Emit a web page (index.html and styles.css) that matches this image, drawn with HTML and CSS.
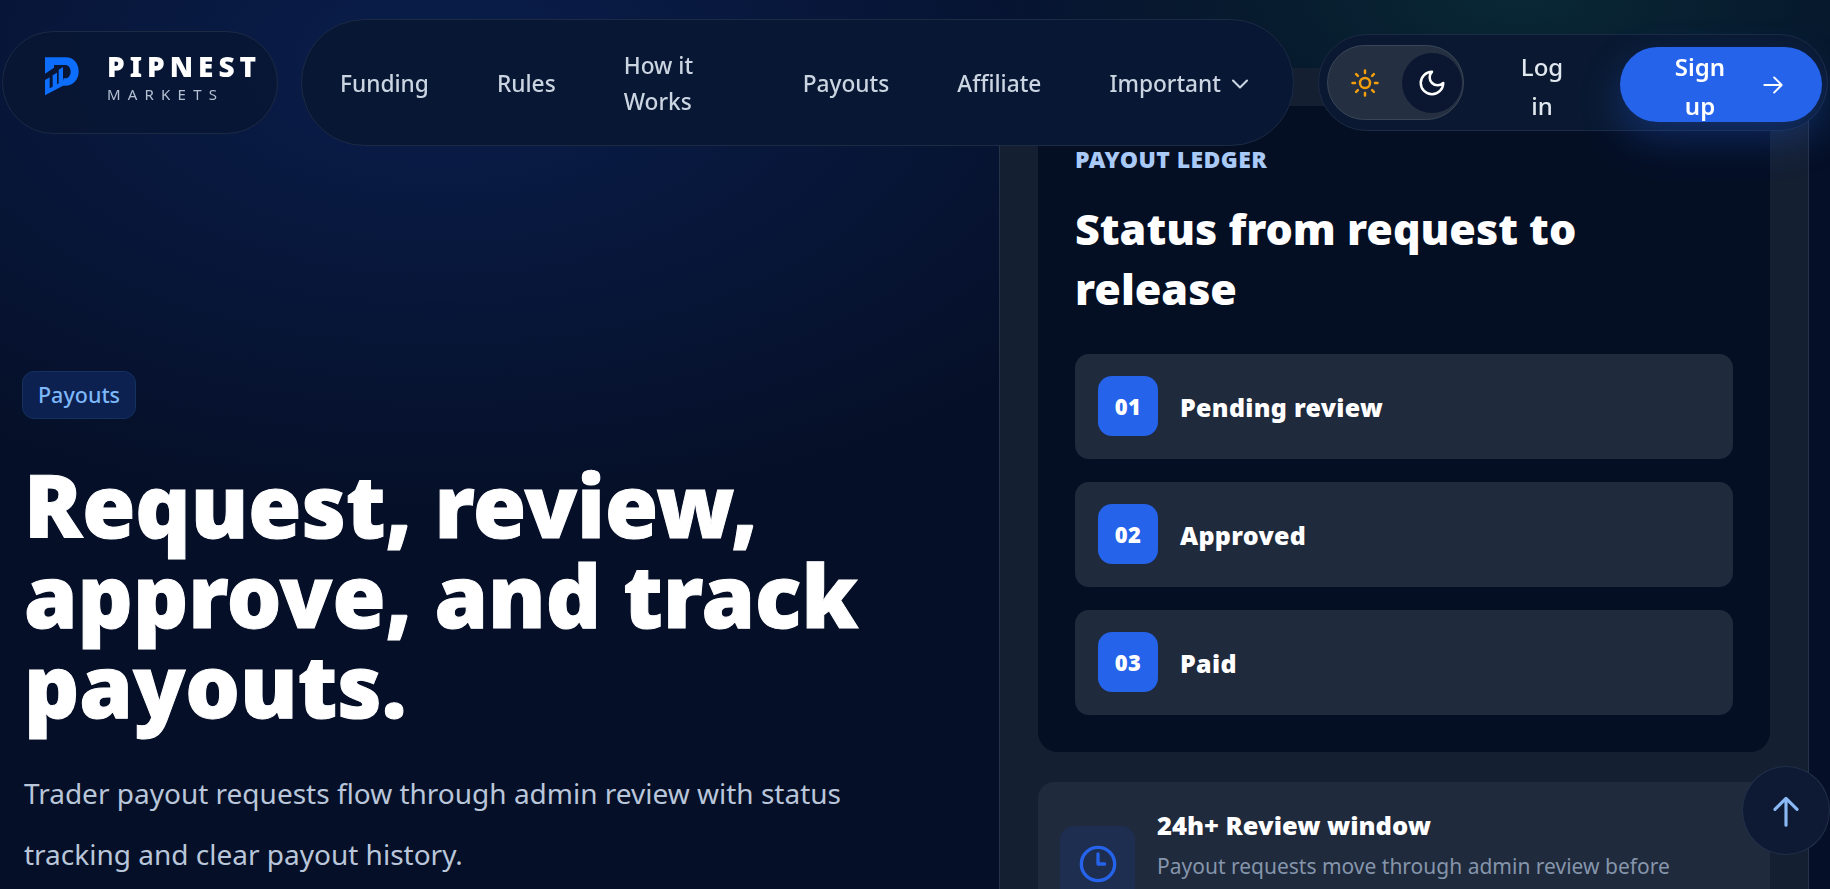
FILE: index.html
```html
<!DOCTYPE html>
<html lang="en">
<head>
  <meta charset="UTF-8" />
  <meta name="viewport" content="width=device-width, initial-scale=1" />
  <title>Payouts - PipNest Markets</title>
  <link rel="stylesheet" href="styles.css">
</head>
<body>

  <!-- Floating header -->
  <header class="site-header">
    <a class="logo-pill" href="#">
      <svg class="logo-mark" viewBox="0 0 150 162" aria-hidden="true">
        <path fill="#0d6efd" d="M15 25H78C100 25 116 42 116 68C116 92 98 110 76 110H66L71 88H76C85 88 92 79 92 68C92 56 85 48 75 48H42V56L15 74Z"/>
        <path fill="#0d6efd" d="M15 93L29 85V118L38 113V79L51 71V106L56 103V62L69 54V110L15 139Z"/>
      </svg>
      <span class="logo-text">
        <strong>PIPNEST</strong>
        <small>MARKETS</small>
      </span>
    </a>

    <nav class="main-nav">
      <a href="#">Funding</a>
      <a href="#">Rules</a>
      <a href="#" class="nav-wrap">How it Works</a>
      <a href="#">Payouts</a>
      <a href="#">Affiliate</a>
      <a href="#" class="nav-drop">Important
        <svg viewBox="0 0 24 24" width="28" height="28" fill="none" stroke="currentColor" stroke-width="1.8" stroke-linecap="round" stroke-linejoin="round"><path d="M6 9l6 6 6-6"/></svg>
      </a>
    </nav>

    <div class="auth-pill">
      <div class="theme-toggle">
        <svg class="sun" viewBox="0 0 24 24" width="30" height="30" fill="none" stroke="#f59e0b" stroke-width="2" stroke-linecap="round"><circle cx="12" cy="12" r="4"/><path d="M12 2v2M12 20v2M4.9 4.9l1.4 1.4M17.7 17.7l1.4 1.4M2 12h2M20 12h2M4.9 19.1l1.4-1.4M17.7 6.3l1.4-1.4"/></svg>
        <span class="knob">
          <svg viewBox="0 0 24 24" width="30" height="30" fill="none" stroke="#fff" stroke-width="2" stroke-linecap="round" stroke-linejoin="round"><path d="M12 3a6 6 0 0 0 9 9 9 9 0 1 1-9-9Z"/></svg>
        </span>
      </div>
      <a class="login" href="#">Log in</a>
      <a class="signup" href="#">
        <span>Sign up</span>
        <svg viewBox="0 0 24 24" width="26" height="26" fill="none" stroke="currentColor" stroke-width="1.8" stroke-linecap="round" stroke-linejoin="round"><path d="M4 12h16M13 5l7 7-7 7"/></svg>
      </a>
    </div>
  </header>

  <main class="page">
    <!-- Hero copy -->
    <section class="hero">
      <span class="tag">Payouts</span>
      <h1>Request, review, approve, and track payouts.</h1>
      <p>Trader payout requests flow through admin review with status tracking and clear payout history.</p>
    </section>

    <!-- Ledger panel -->
    <aside class="panel">
      <div class="ledger">
        <div class="eyebrow">PAYOUT LEDGER</div>
        <h2>Status from request to release</h2>
        <div class="status-row"><span class="num">01</span><span>Pending review</span></div>
        <div class="status-row"><span class="num">02</span><span>Approved</span></div>
        <div class="status-row"><span class="num">03</span><span>Paid</span></div>
      </div>

      <div class="info-card">
        <span class="info-icon">
          <svg viewBox="0 0 24 24" width="40" height="40" fill="none" stroke="#2563eb" stroke-width="2" stroke-linecap="round" stroke-linejoin="round"><circle cx="12" cy="12" r="10"/><path d="M12 6v6h4"/></svg>
        </span>
        <div>
          <h3>24h+ Review window</h3>
          <p>Payout requests move through admin review before</p>
        </div>
      </div>
    </aside>
  </main>

  <a class="to-top" href="#">
    <svg viewBox="0 0 24 24" width="38" height="38" fill="none" stroke="#8ab8f5" stroke-width="2" stroke-linecap="round" stroke-linejoin="round"><path d="M12 21V4M5 11l7-7 7 7"/></svg>
  </a>

</body>
</html>
```

FILE: styles.css
```css
/* Basic reset */
* {
  margin: 0;
  padding: 0;
  box-sizing: border-box;
}

html, body {
  height: 100%;
}

body {
  font-family: 'Noto Sans', 'Open Sans', sans-serif;
  color: #fff;
  overflow: hidden;
  background:
    radial-gradient(ellipse 520px 200px at 1520px 0, rgba(14, 70, 70, 0.45), transparent),
    radial-gradient(ellipse 820px 460px at 440px 60px, #0a1e4c, transparent),
    #050f27;
}

a {
  color: inherit;
  text-decoration: none;
}

/* Header */
.site-header {
  position: fixed;
  top: 19px;
  left: 2px;
  z-index: 5;
  display: flex;
  align-items: center;
}

.logo-pill {
  display: flex;
  align-items: center;
  gap: 17px;
  width: 276px;
  height: 103px;
  padding-left: 37px;
  border: 1px solid #1c2a44;
  border-radius: 52px;
  background: rgba(8, 22, 52, 0.85);
}

.logo-mark {
  width: 50px;
  height: 54px;
  margin-bottom: 14px;
}

.logo-text {
  display: flex;
  flex-direction: column;
  padding-bottom: 6px;
}

.logo-text strong {
  font-size: 28px;
  font-weight: 900;
  line-height: 30px;
  letter-spacing: 5px;
}

.logo-text small {
  font-size: 15px;
  line-height: 27px;
  letter-spacing: 7.2px;
  color: #b4c0d2;
}

.main-nav {
  display: flex;
  align-items: center;
  gap: 68px;
  width: 993px;
  height: 127px;
  margin-left: 23px;
  padding: 2px 0 0 38px;
  border: 1px solid #1c2a44;
  border-radius: 64px;
  background: #081734;
  font-size: 22.7px;
  font-weight: 500;
  line-height: 36px;
  color: #cbd5e1;
}

.nav-wrap {
  width: 111px;
}

.nav-drop {
  display: flex;
  align-items: center;
  gap: 5px;
}

.auth-pill {
  display: flex;
  align-items: center;
  width: 510px;
  height: 97px;
  margin-left: 24px;
  padding-left: 8px;
  border: 1px solid #1c2a44;
  border-radius: 49px;
  background: #0a1931;
}

.theme-toggle {
  display: flex;
  align-items: center;
  justify-content: space-between;
  width: 137px;
  height: 75px;
  padding: 0 1px 0 22px;
  border: 1px solid #3a4658;
  border-radius: 38px;
  background: #243042;
}

.knob {
  display: flex;
  align-items: center;
  justify-content: center;
  width: 60px;
  height: 60px;
  border-radius: 50%;
  background: #0b1730;
}

.login {
  width: 60px;
  margin-left: 48px;
  padding-top: 6px;
  font-size: 24px;
  font-weight: 500;
  line-height: 39px;
  text-align: center;
  color: #e2e8f0;
}

.signup {
  display: flex;
  align-items: center;
  justify-content: space-between;
  width: 202px;
  height: 75px;
  margin: 4px 0 0 48px;
  padding: 0 36px 0 50px;
  border-radius: 38px;
  background: #2563eb;
  box-shadow: 0 16px 40px rgba(37, 99, 235, 0.3);
  font-size: 24px;
  font-weight: 600;
  line-height: 39px;
  text-align: center;
}

.signup span {
  width: 60px;
  padding-top: 2px;
}

/* Page body */
.page {
  display: grid;
  grid-template-columns: 999px 810px;
  grid-template-rows: minmax(0, 1fr);
  height: 100%;
}

.hero {
  padding: 371px 0 0 24px;
}

.tag {
  display: inline-block;
  margin-left: -2px;
  padding: 7px 15px;
  border: 1px solid #14315f;
  border-radius: 12px;
  background: #0c2150;
  font-size: 21.5px;
  font-weight: 500;
  line-height: 32px;
  color: #7db8fa;
}

.hero h1 {
  width: 880px;
  margin-top: 41px;
  font-size: 86px;
  font-weight: 900;
  line-height: 90px;
  -webkit-text-stroke: 1px #fff;
}

.hero p {
  width: 860px;
  margin-top: 33px;
  font-size: 28px;
  line-height: 61px;
  color: #b9c6da;
}

.panel {
  margin-top: 68px;
  padding: 38px;
  overflow: hidden;
  border-left: 1px solid #263246;
  border-right: 1px solid #263246;
  background: #141f32;
}

.ledger {
  height: 646px;
  padding: 37px 37px;
  border-radius: 20px;
  background: #050f24;
}

.eyebrow {
  font-size: 23px;
  font-weight: 900;
  line-height: 32px;
  letter-spacing: 0.4px;
  color: #a9c9f7;
}

.ledger h2 {
  margin: 24px 0 35px;
  font-size: 43px;
  font-weight: 900;
  line-height: 60px;
}

.status-row {
  display: flex;
  align-items: center;
  gap: 22px;
  height: 105px;
  margin-bottom: 23px;
  padding-left: 23px;
  border-radius: 14px;
  background: #1f2a3c;
  font-size: 25px;
  font-weight: 900;
  letter-spacing: 0.3px;
}

.num {
  display: flex;
  align-items: center;
  justify-content: center;
  width: 60px;
  height: 60px;
  margin-bottom: 2px;
  border-radius: 14px;
  background: #2563eb;
  font-size: 22px;
}

.info-card {
  display: flex;
  align-items: flex-start;
  gap: 22px;
  height: 200px;
  margin-top: 30px;
  padding: 23px 22px;
  border-radius: 16px;
  background: #1f2a3c;
}

.info-icon {
  display: flex;
  align-items: center;
  justify-content: center;
  flex-shrink: 0;
  width: 75px;
  height: 75px;
  margin-top: 21px;
  border-radius: 14px;
  background: #1e2e50;
}

.info-card h3 {
  font-size: 25.5px;
  font-weight: 900;
  line-height: 40px;
}

.info-card p {
  margin-top: 4px;
  font-size: 21px;
  line-height: 34px;
  color: #8595ab;
}

/* Back to top */
.to-top {
  position: fixed;
  top: 766px;
  left: 1742px;
  z-index: 6;
  display: flex;
  align-items: center;
  justify-content: center;
  width: 88px;
  height: 89px;
  border: 1px solid #22304a;
  border-radius: 50%;
  background: #0e1a33;
}
```
